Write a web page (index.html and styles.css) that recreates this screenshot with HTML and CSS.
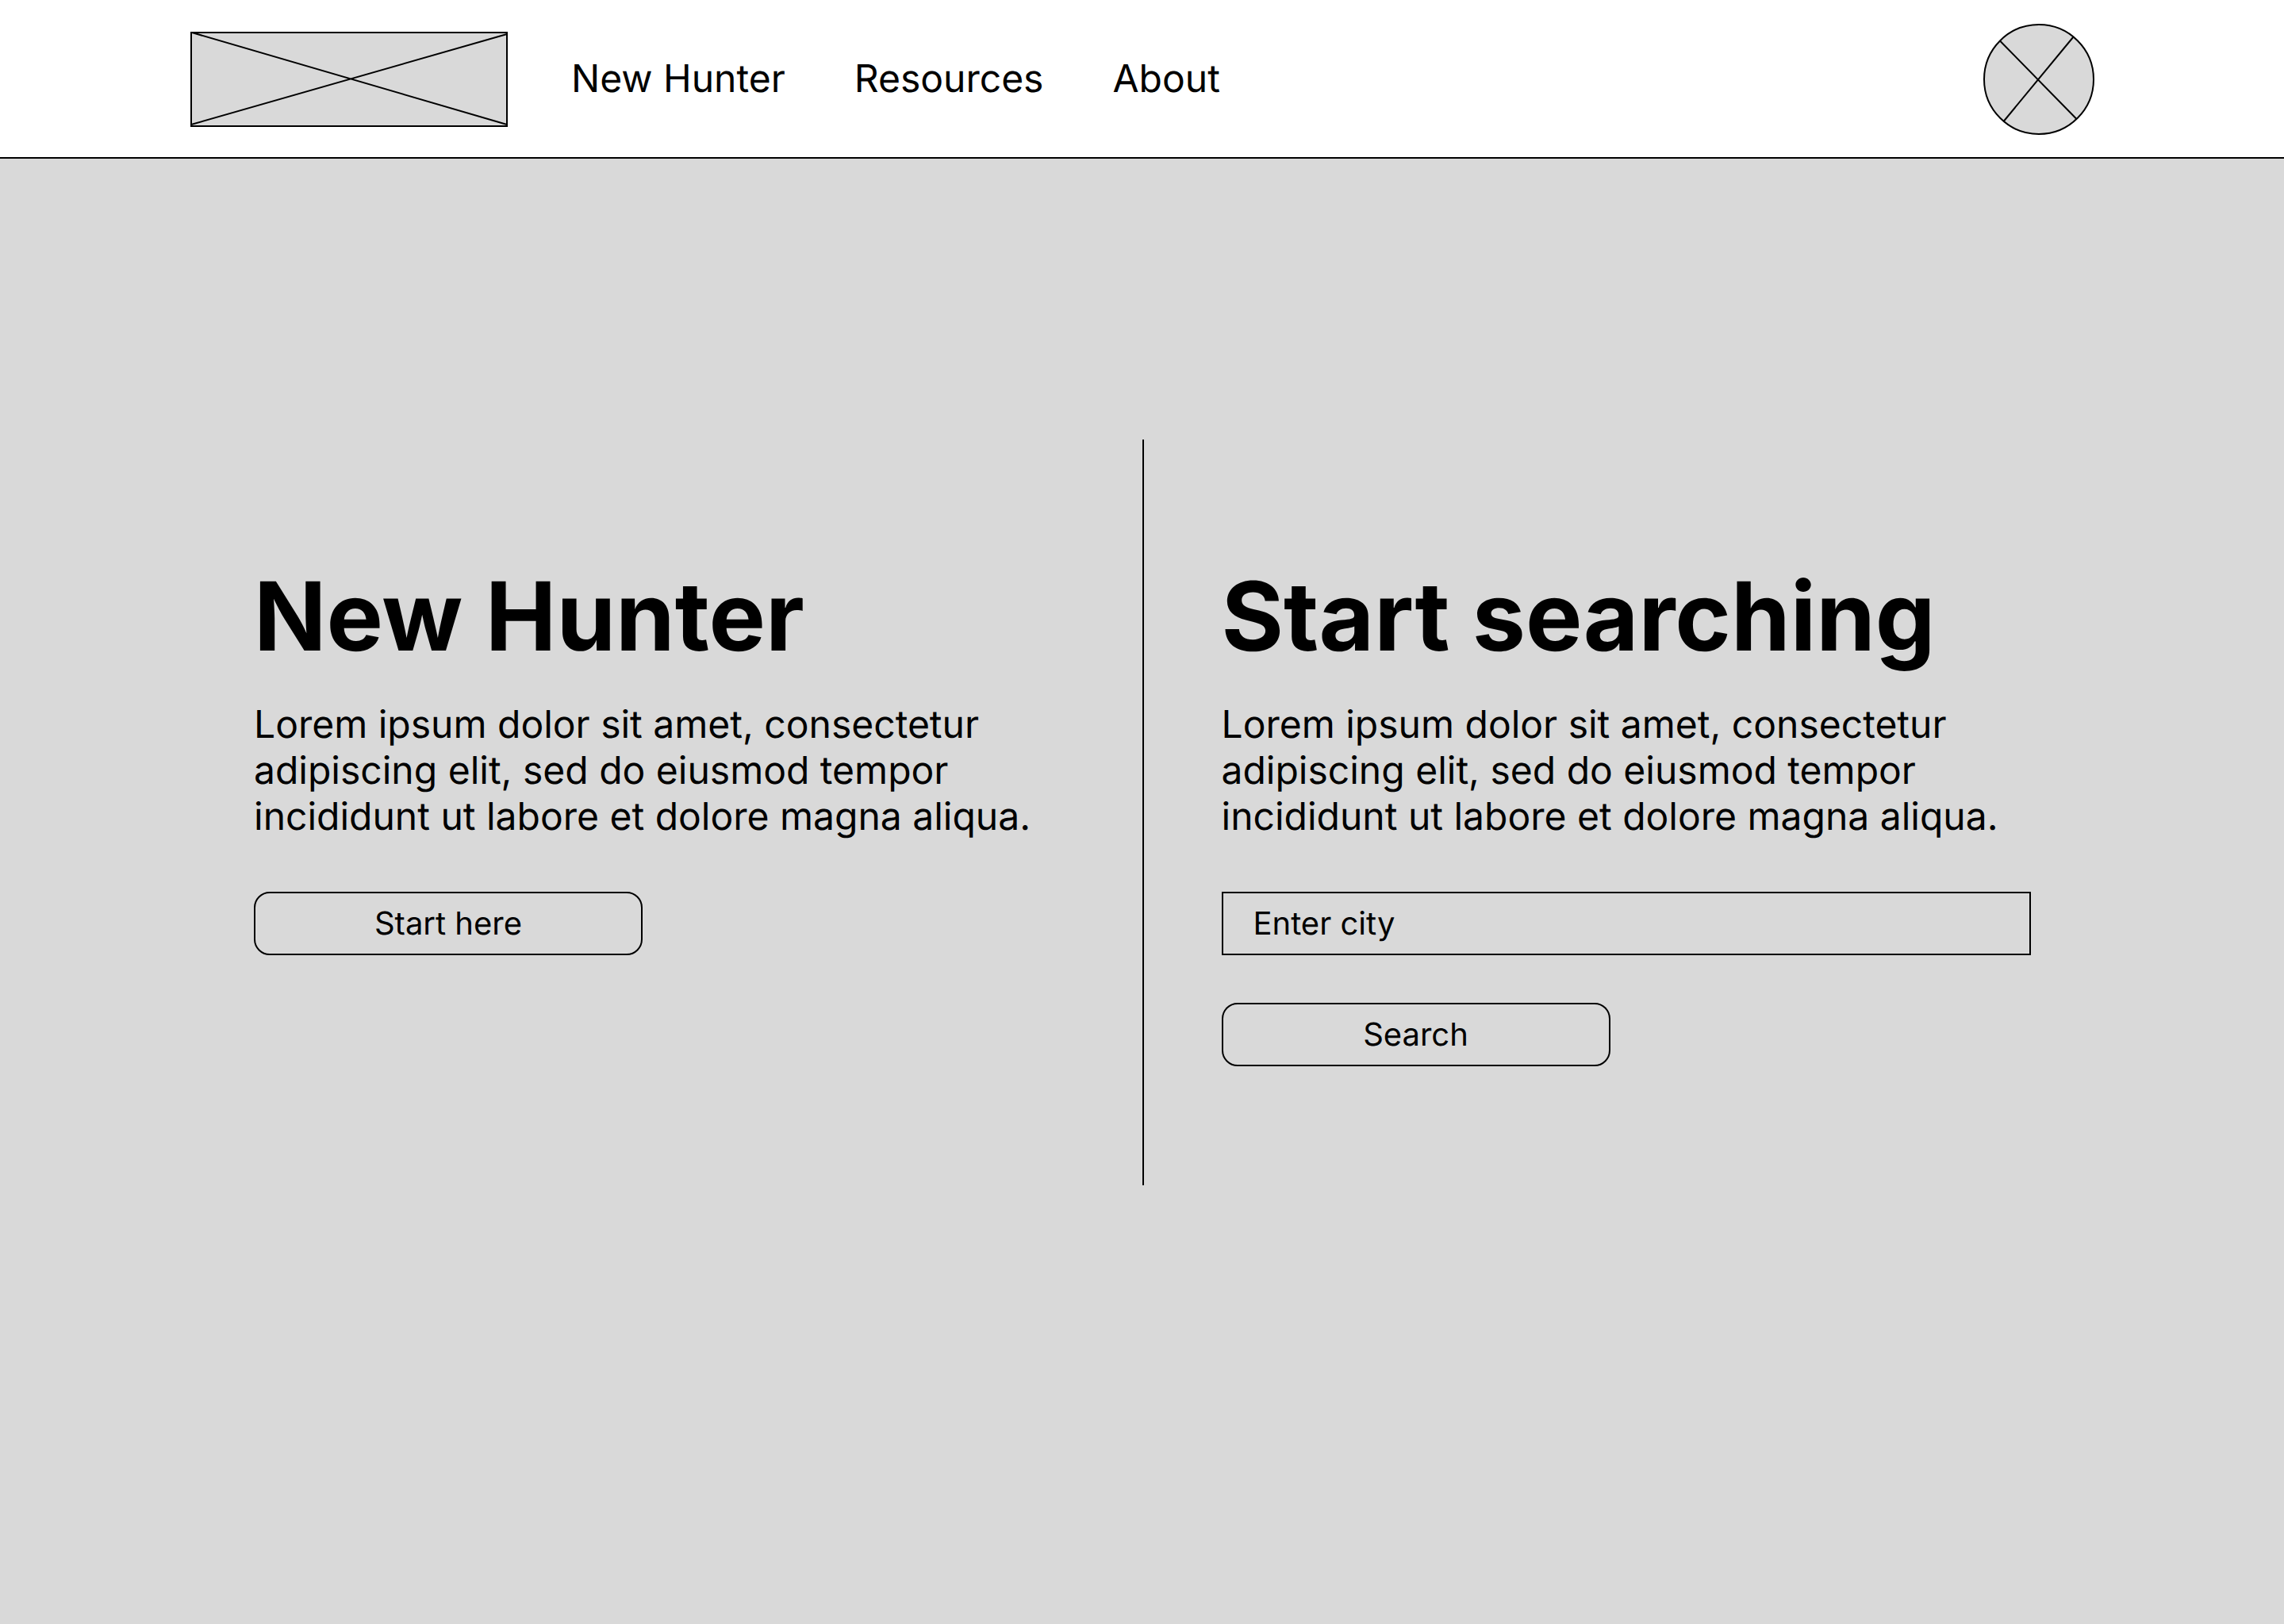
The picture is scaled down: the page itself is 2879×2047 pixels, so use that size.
FILE: index.html
```html
<!DOCTYPE html>
<html lang="en">
<head>
  <meta charset="utf-8">
  <meta name="viewport" content="width=device-width, initial-scale=1">
  <title>New Hunter</title>
  <link rel="stylesheet" href="styles.css">
</head>
<body>
  <header class="site-header">
    <a class="logo" href="#" aria-label="Home">
      <svg width="400" height="120" viewBox="0 0 400 120" fill="none" stroke="#000" aria-hidden="true">
        <rect x="1" y="1" width="398" height="118" fill="#d9d9d9" stroke-width="2"/>
        <path d="M2 1L399 117M1 117L399 3" stroke-width="2"/>
      </svg>
    </a>
    <nav class="site-nav">
      <a href="#">New Hunter</a>
      <a href="#">Resources</a>
      <a href="#">About</a>
    </nav>
    <a class="avatar" href="#" aria-label="Profile">
      <svg width="140" height="140" viewBox="0 0 140 140" fill="none" stroke="#000" stroke-width="2" aria-hidden="true">
        <circle cx="70" cy="70" r="69" fill="#d9d9d9"/>
        <path d="M21 21.500L117.500 120M113.500 16.500L26 122.500"/>
      </svg>
    </a>
  </header>
  <main class="split">
    <section class="panel">
      <h1 class="panel-title">New Hunter</h1>
      <p class="panel-text">Lorem ipsum dolor sit amet, consectetur adipiscing elit, sed do eiusmod tempor incididunt ut labore et dolore magna aliqua.</p>
      <button class="button" type="button">Start here</button>
    </section>
    <section class="panel panel-search">
      <h1 class="panel-title">Start searching</h1>
      <p class="panel-text">Lorem ipsum dolor sit amet, consectetur adipiscing elit, sed do eiusmod tempor incididunt ut labore et dolore magna aliqua.</p>
      <form class="search-form">
        <input class="field" type="text" placeholder="Enter city" aria-label="City">
        <button class="button" type="submit">Search</button>
      </form>
    </section>
  </main>
</body>
</html>
```

FILE: styles.css
```css
* {
  box-sizing: border-box;
}

body {
  margin: 0;
  min-height: 100vh;
  background: #d9d9d9;
  color: #000;
  font-family: Inter, "Liberation Sans", sans-serif;
  font-size: 48px;
  line-height: 58px;
  text-rendering: geometricPrecision;
}

.site-header {
  display: flex;
  align-items: center;
  padding: 30px 239px 28px 240px;
  background: #fff;
  border-bottom: 2px solid #000;
}

.logo,
.avatar {
  display: block;
}

.logo svg,
.avatar svg {
  display: block;
}

.avatar {
  margin-left: auto;
}

.site-nav {
  display: flex;
  gap: 87px;
  margin-left: 80px;
  padding-bottom: 2px;
}

.site-nav a {
  color: inherit;
  text-decoration: none;
}

.split {
  display: grid;
  grid-template-columns: 1fr 1fr;
  padding: 354px 0;
}

.panel {
  padding: 150px 100px 150px 320px;
}

.panel-search {
  padding-left: 98px;
  padding-right: 319px;
  border-left: 2px solid #000;
}

.panel-title {
  margin: 0 0 34px;
  font-size: 120px;
  line-height: 146px;
  font-weight: 700;
}

.panel-text {
  margin: 0 0 66px;
}

.search-form {
  display: flex;
  flex-direction: column;
  align-items: flex-start;
  gap: 60px;
}

.field,
.button {
  height: 80px;
  border: 2px solid #000;
  background: transparent;
  color: inherit;
  font: inherit;
  font-size: 40px;
  line-height: 48px;
  text-rendering: inherit;
}

.field {
  width: 100%;
  padding: 0 38px 2px;
  border-radius: 0;
}

.field::placeholder {
  color: #000;
  opacity: 1;
}

.button {
  display: block;
  width: 490px;
  max-width: 100%;
  padding: 0;
  border-radius: 20px;
  text-align: center;
}
```
